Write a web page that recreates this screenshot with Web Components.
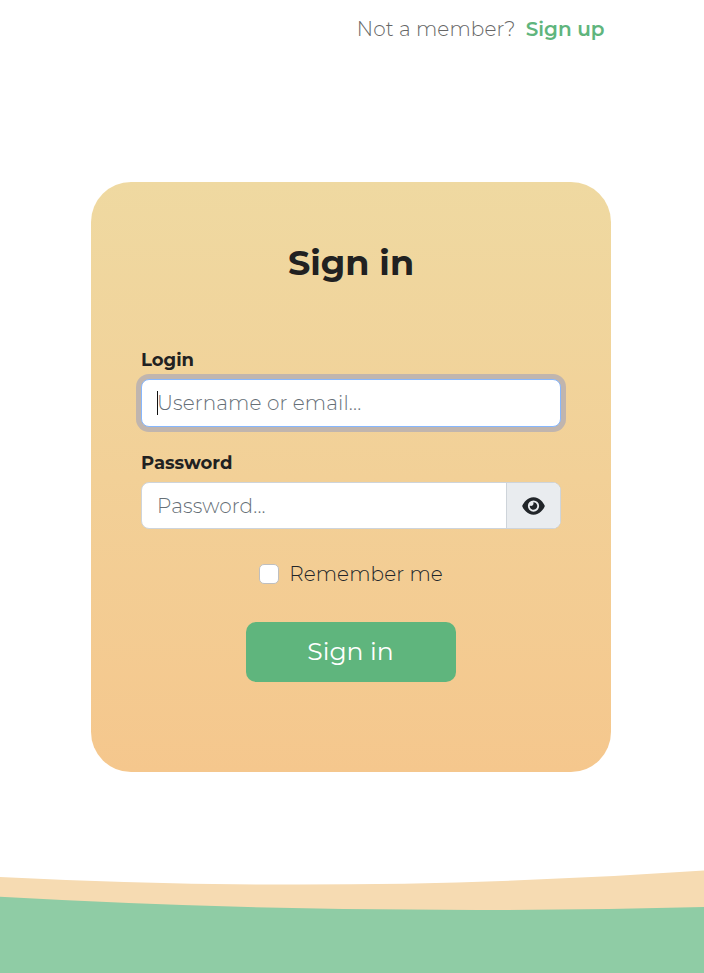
<!DOCTYPE html>
<html lang="en">
<head>
<meta charset="utf-8">
<title>Sign in</title>
<style>
html,body{height:100%}
body{margin:0;background:#fff;font-family:Montserrat,Inter,sans-serif;font-weight:300;font-size:20px;color:#212529;overflow:hidden}
</style>
</head>
<body>
<signin-page>
  <member-prompt slot="top" action="Sign up">Not a member?</member-prompt>
  <signin-card heading="Sign in">
    <form-field label="Login" placeholder="Username or email..." focused></form-field>
    <form-field label="Password" placeholder="Password..." class="pw"><eye-icon slot="addon"></eye-icon></form-field>
    <check-option>Remember me</check-option>
    <action-button>Sign in</action-button>
  </signin-card>
  <wave-footer slot="bottom"></wave-footer>
</signin-page>
<script>
const define = (name, markup) => customElements.define(name, class extends HTMLElement {
  constructor() {
    super();
    this.attachShadow({ mode: 'open' }).innerHTML = markup(this);
  }
});

define('signin-page', () => `<style>
  :host{display:flex;flex-direction:column;height:973px;width:704px}
  header{height:182px;flex:none;display:flex;justify-content:flex-end;align-items:flex-start;padding:17px 99.500px 0 0;box-sizing:border-box}
  main{flex:1;padding-left:91px}
</style><header><slot name="top"></slot></header><main><slot></slot></main><slot name="bottom"></slot>`);

define('member-prompt', el => `<style>
  :host{display:flex;gap:10px;line-height:24px;color:#666;white-space:nowrap}
  span{letter-spacing:.1px}
  a{color:#5fb57d;font-weight:600;text-decoration:none}
</style><span><slot></slot></span><a href="#">${el.getAttribute('action')}</a>`);

define('signin-card', el => `<style>
  :host{display:flex;flex-direction:column;align-items:center;box-sizing:border-box;width:520px;height:590px;padding:60px 50px 0;border-radius:40px;background:linear-gradient(#efd9a1,#f5c78d)}
  h1{margin:0 0 66px;font-size:35px;line-height:42px;font-weight:700;color:#212121}
</style><h1>${el.getAttribute('heading')}</h1><slot></slot>`);

define('form-field', el => `<style>
  :host{display:block;width:420px;margin-bottom:26px}
  :host(.pw){margin-bottom:32px}
  label{display:block;font-size:18px;font-weight:700;line-height:20px;margin-bottom:9px;color:#212121}
  .box{display:flex;box-sizing:border-box;height:48px;border:1px solid #ced4da;border-radius:8px;background:#fff;overflow:hidden}
  :host(.pw) .box{height:47px}
  :host([focused]) .box{border-color:#86b7fe;box-shadow:0 0 0 5px #c0b5ae}
  .text{flex:1;display:flex;align-items:center;padding-left:15px;color:#666f77;letter-spacing:.15px}
  .caret{display:none;width:1px;height:24px;background:#111;margin-right:-1px}
  :host([focused]) .caret{display:block}
  .addon{width:53px;display:flex;align-items:center;justify-content:center;background:#e9ecef;border-left:1px solid #ced4da}
</style><label>${el.getAttribute('label')}</label>
<div class="box"><div class="text" role="textbox"><i class="caret"></i><span>${el.getAttribute('placeholder')}</span></div>${el.querySelector('[slot=addon]') ? '<div class="addon"><slot name="addon"></slot></div>' : ''}</div>`);

define('eye-icon', () => `<style>:host{display:block;width:23px;height:20px;margin-right:1px}svg{display:block}</style>
<svg width="23" height="20" viewBox="0 0 576 512" fill="#212529"><path d="M288 32c-80.800 0-145.500 36.800-192.600 80.600C48.600 156 17.300 208 2.500 243.700c-3.300 7.900-3.300 16.700 0 24.600C17.300 304 48.600 356 95.400 399.400C142.500 443.200 207.200 480 288 480s145.500-36.800 192.600-80.600c46.800-43.500 78.100-95.400 93-131.100c3.300-7.900 3.300-16.700 0-24.600c-14.900-35.700-46.200-87.700-93-131.100C433.500 68.800 368.800 32 288 32zM144 256a144 144 0 1 1 288 0 144 144 0 1 1-288 0zm144-64c0 35.300-28.700 64-64 64-7.100 0-13.900-1.200-20.300-3.300-5.500-1.800-11.900 1.600-11.700 7.400.3 6.900 1.300 13.800 3.200 20.700 13.700 51.200 66.400 81.600 117.600 67.900s81.600-66.400 67.900-117.600c-11.100-41.500-47.800-69.400-88.600-71.100-5.800-.2-9.200 6.100-7.400 11.700 2.100 6.400 3.300 13.200 3.300 20.300z"/></svg>`);

define('check-option', () => `<style>
  :host{display:flex;align-items:center;gap:10px;height:26px;margin-bottom:35px}
  i{box-sizing:border-box;width:20px;height:20px;border:1px solid #bfbfbf;border-radius:5px;background:#fff}
  span{letter-spacing:.1px}
</style><i role="checkbox" aria-checked="false"></i><span><slot></slot></span>`);

define('action-button', () => `<style>
  :host{display:block}
  button{display:block;width:210px;height:60px;padding:0 1px 2px 0;border:0;border-radius:10px;background:#5fb57d;color:#fff;font:400 25px Montserrat,Inter,sans-serif}
</style><button><slot></slot></button>`);

define('wave-footer', () => `<style>:host{display:block;height:113px;flex:none}svg{display:block}</style>
<svg width="704" height="113" viewBox="0 860 704 113">
  <path fill="#f6dbb2" d="M0 877Q352 895 704 870.500V973H0z"/>
  <path fill="#8fcca5" d="M0 896.700Q352 916.500 704 907V973H0z"/>
</svg>`);
</script>
</body>
</html>
